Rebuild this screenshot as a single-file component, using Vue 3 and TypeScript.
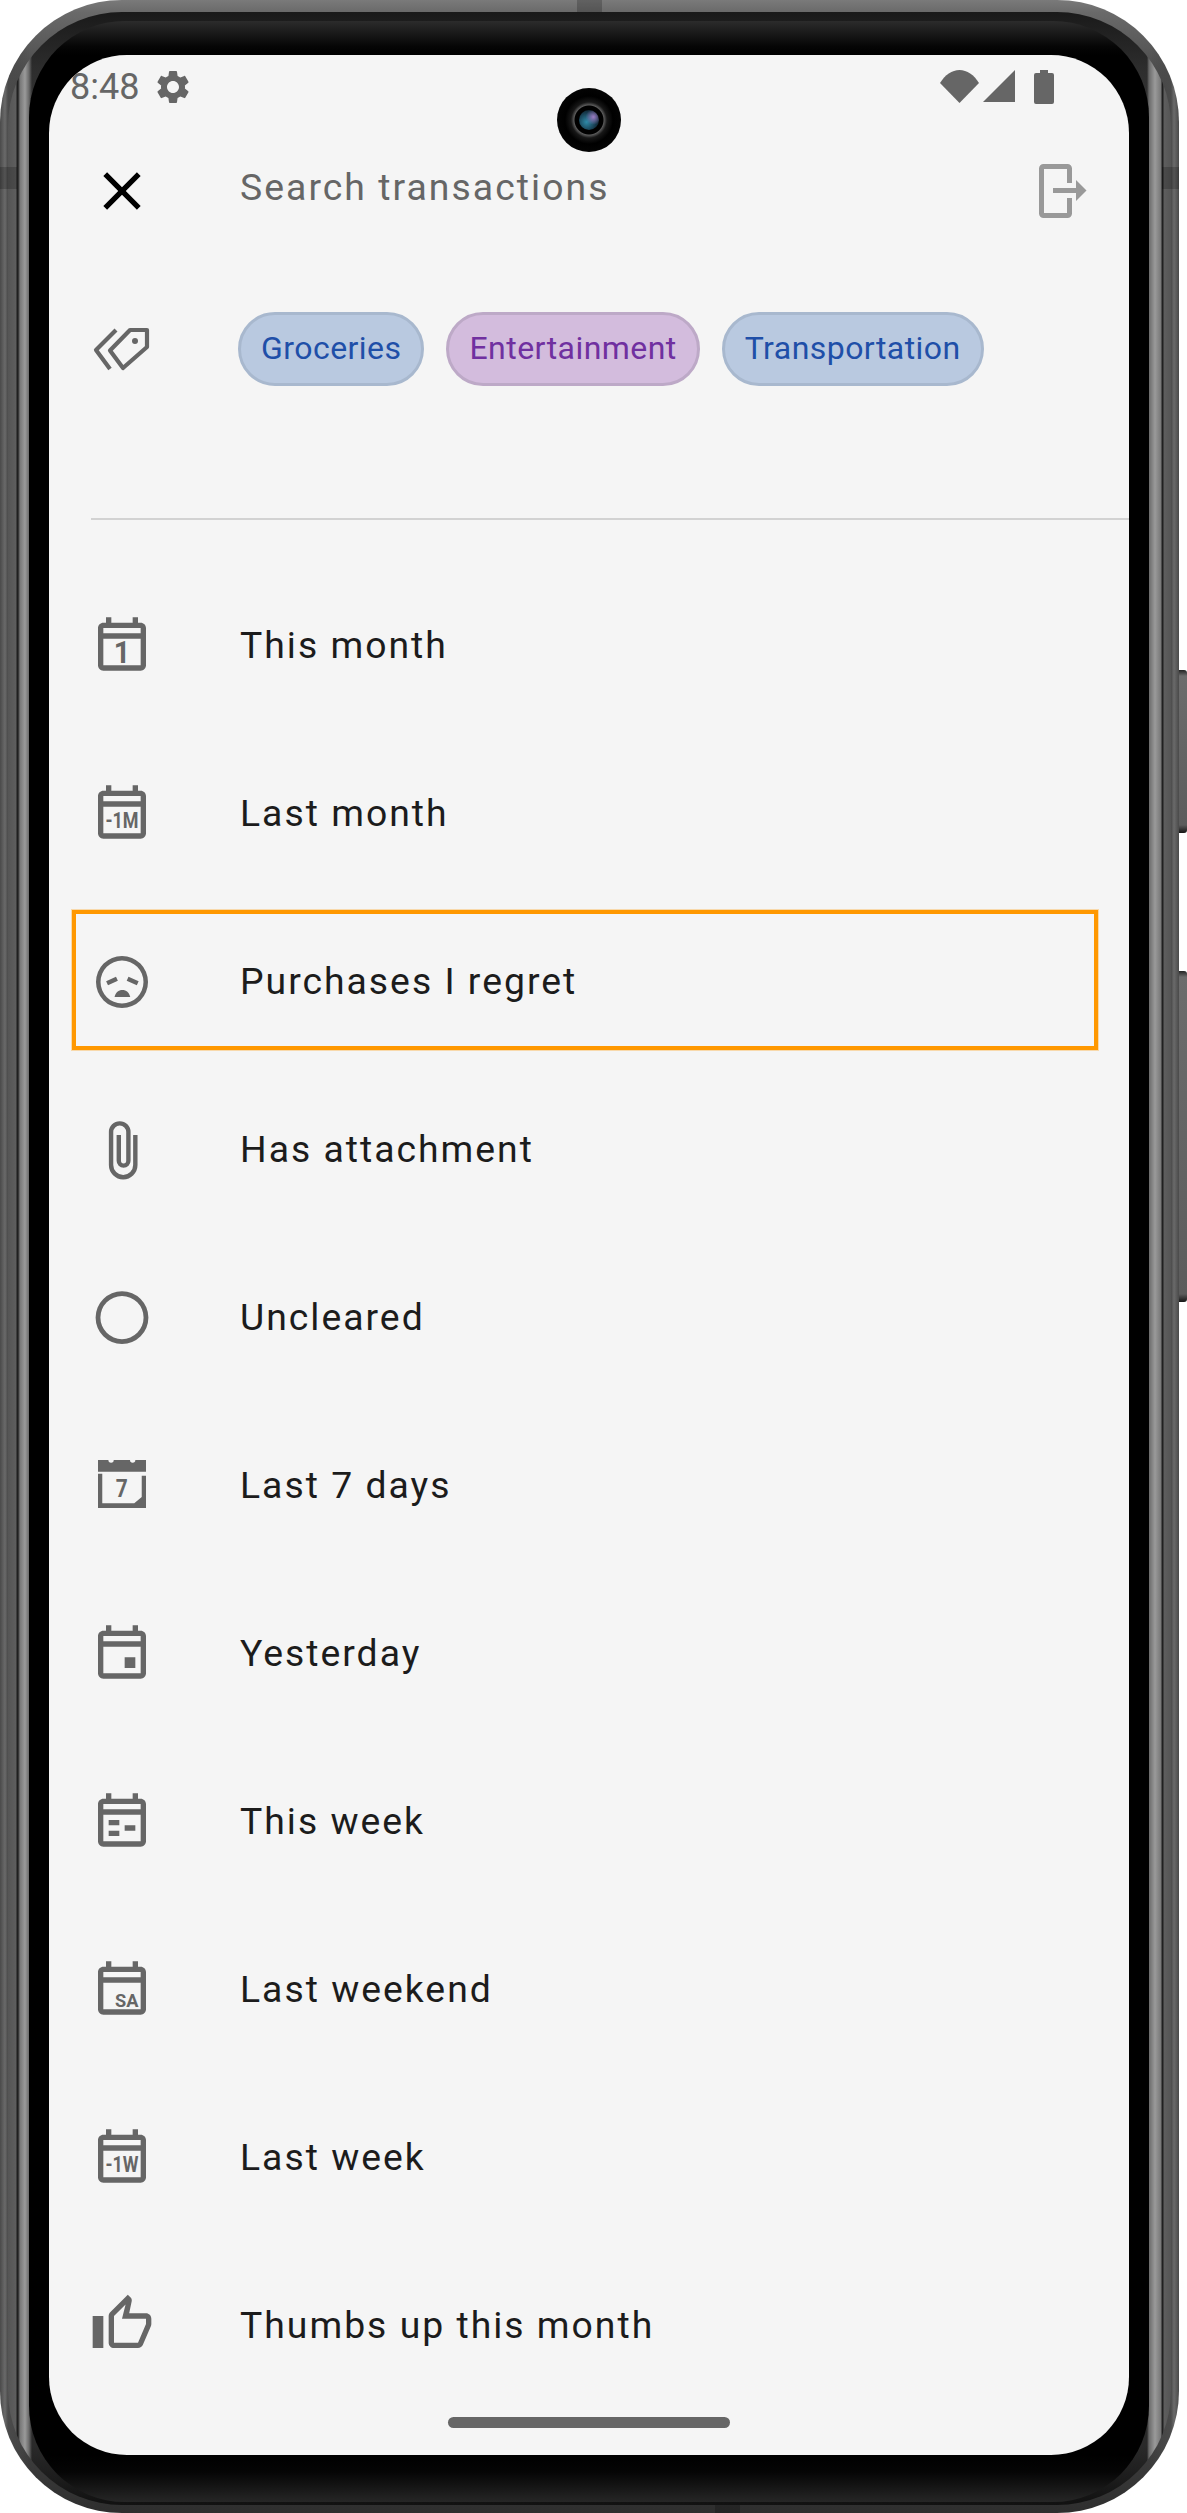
<template>
  <div class="phone">
    <span class="side-btn power"></span>
    <span class="side-btn volume"></span>
    <span class="antenna top"></span>
    <span class="antenna bottom"></span>
    <span class="antenna left"></span>
    <span class="antenna right"></span>

    <div class="rim">
      <div class="bezel">
        <main class="screen">
          <div class="camera"><span class="lens"></span></div>

          <div class="status-bar">
            <span class="time">8:48</span>
            <svg class="gear" viewBox="0 0 24 24"><path :d="gearPath" /></svg>
            <div class="status-icons">
              <svg class="wifi" viewBox="0 0 39 33"><path d="M0 13C5 5 12 0 19.500 0S34 5 39 13L19.500 33z" /></svg>
              <svg class="signal" viewBox="0 0 32 32"><path d="M0 32 32 0v32z" /></svg>
              <svg class="battery" viewBox="0 0 20 34"><path d="M6 0h8v3h4a2 2 0 0 1 2 2v27a2 2 0 0 1-2 2H2a2 2 0 0 1-2-2V5a2 2 0 0 1 2-2h4z" /></svg>
            </div>
          </div>

          <div class="search-row">
            <svg class="icon" viewBox="0 0 24 24">
              <path class="black" d="M19 6.410 17.590 5 12 10.590 6.410 5 5 6.410 10.590 12 5 17.590 6.410 19 12 13.410 17.590 19 19 17.590 13.410 12z" />
            </svg>
            <span class="search-text">Search transactions</span>
            <svg class="exit" viewBox="0 0 48 54">
              <path d="M30.500 19V4.500a2 2 0 0 0-2-2H4.500a2 2 0 0 0-2 2v45a2 2 0 0 0 2 2h24a2 2 0 0 0 2-2V34M14 26.500h24" />
              <path class="head" d="M37 16 47.500 26.500 37 37z" />
            </svg>
          </div>

          <div class="chip-row">
            <svg class="icon" viewBox="8 0 64 64">
              <path class="tag" d="M65 13H48L28 33.500 41 51 65 30zM34 13 14 33l14 19" />
              <circle cx="53" cy="24" r="3" />
            </svg>
            <div class="chips">
              <span v-for="chip in chips" :key="chip.name" class="chip" :class="chip.tone">{{ chip.name }}</span>
            </div>
          </div>

          <div class="divider"></div>

          <ul class="list">
            <li v-for="row in rows" :key="row.label" class="row">
              <svg class="icon" viewBox="0 0 24 24">
                <path v-if="row.d" fill-rule="evenodd" :d="row.d" />
                <path v-if="row.line" class="line" :d="row.line" />
                <text
                  v-if="row.mark"
                  class="mark"
                  :x="row.mark.x"
                  :y="row.mark.y"
                  :font-size="row.mark.size"
                  :textLength="row.mark.len"
                  lengthAdjust="spacingAndGlyphs"
                >{{ row.mark.text }}</text>
              </svg>
              <span class="row-label">{{ row.label }}</span>
              <span v-if="row.focused" class="focus-box"></span>
            </li>
          </ul>

          <div class="home-bar"></div>
        </main>
      </div>
    </div>
  </div>
</template>

<script setup lang="ts">
interface Mark {
  text: string
  x: number
  y: number
  size: number
  len: number
}

interface Row {
  label: string
  d?: string
  line?: string
  mark?: Mark
  focused?: boolean
}

const gearPath =
  'M19.14 12.94c.04-.3.06-.61.06-.94 0-.32-.02-.64-.07-.94l2.03-1.58c.18-.14.23-.41.12-.61l-1.92-3.32c-.12-.22-.37-.29-.59-.22l-2.39.96c-.5-.38-1.03-.7-1.62-.94l-.36-2.54c-.04-.24-.24-.41-.48-.41h-3.84c-.24 0-.43.17-.47.41l-.36 2.54c-.59.24-1.13.57-1.62.94l-2.39-.96c-.22-.08-.47 0-.59.22L2.74 8.87c-.12.21-.08.47.12.61l2.03 1.58c-.05.3-.09.63-.09.94s.02.64.07.94l-2.03 1.58c-.18.14-.23.41-.12.61l1.92 3.32c.12.22.37.29.59.22l2.39-.96c.5.38 1.03.7 1.62.94l.36 2.54c.05.24.24.41.48.41h3.84c.24 0 .44-.17.47-.41l.36-2.54c.59-.24 1.13-.56 1.62-.94l2.39.96c.22.08.47 0 .59-.22l1.92-3.32c.12-.22.07-.47-.12-.61l-2.01-1.58zM12 15.6c-1.98 0-3.6-1.62-3.6-3.6s1.62-3.6 3.6-3.6 3.6 1.62 3.6 3.6-1.62 3.6-3.6 3.6z'

const calendar =
  'M19 4h-1V2h-2v2H8V2H6v2H5c-1.1 0-2 .9-2 2v14c0 1.1.9 2 2 2h14c1.1 0 2-.9 2-2V6c0-1.1-.9-2-2-2zm0 16H5V10h14v10zm0-12H5V6h14v2z'

const chips = [
  { name: 'Groceries', tone: 'blue' },
  { name: 'Entertainment', tone: 'purple' },
  { name: 'Transportation', tone: 'blue' },
]

const rows: Row[] = [
  { label: 'This month', d: calendar, mark: { text: '1', x: 8.9, y: 19, size: 11.6, len: 6.2 } },
  { label: 'Last month', d: calendar, mark: { text: '-1M', x: 5.8, y: 18.1, size: 8.4, len: 12.4 } },
  {
    label: 'Purchases I regret',
    d: 'M12 3a9.750 9.750 0 1 0 0 19.500 9.750 9.750 0 0 0 0-19.500zm0 1.700a8.050 8.050 0 1 1 0 16.100 8.050 8.050 0 0 1 0-16.100zM9.200 18.350c.4-1.600 1.500-2.600 2.950-2.600s2.550 1 2.950 2.600z',
    line: 'M6.400 13.250 10.100 11.500M14.100 11.500 17.900 13.250',
    focused: true,
  },
  {
    label: 'Has attachment',
    line: 'M17 7.100V18.400a4.550 4.550 0 0 1-9.100 0V6a3.250 3.250 0 0 1 6.500 0V16.800a1.800 1.800 0 0 1-3.600 0V7.100',
  },
  {
    label: 'Uncleared',
    d: 'M12 2.700a9.900 9.900 0 1 0 0 19.800 9.900 9.900 0 0 0 0-19.800zm0 1.800a8.100 8.100 0 1 1 0 16.200 8.100 8.100 0 0 1 0-16.200z',
  },
  {
    label: 'Last 7 days',
    d: 'M3 3H6.900a1 1 0 0 0 2 0H15a1 1 0 0 0 2 0H21V7.400H3zM3 8.200H4.600V19.250H16.600L19.400 16.900V8.900H21V21H3z',
    mark: { text: '7', x: 9.700, y: 17, size: 9.8, len: 4.500 },
  },
  { label: 'Yesterday', d: calendar + 'M13 14h4v4h-4z' },
  { label: 'This week', d: calendar + 'M7 12h4v2H7zM7 16h4v2H7zM13 14h4v2h-4z' },
  { label: 'Last weekend', d: calendar, mark: { text: 'SA', x: 9.400, y: 19.100, size: 7.200, len: 8.800 } },
  { label: 'Last week', d: calendar, mark: { text: '-1W', x: 5.8, y: 18.1, size: 8.4, len: 12.4 } },
  {
    label: 'Thumbs up this month',
    d: 'M9 21h9c.83 0 1.54-.5 1.84-1.22l3.02-7.05c.09-.23.14-.47.14-.73v-2c0-1.1-.9-2-2-2h-6.31l.95-4.57.03-.32c0-.41-.17-.79-.44-1.06L14.170 1 7.580 7.590C7.220 7.950 7 8.450 7 9v10c0 1.100.9 2 2 2zM9 9l4.340-4.340L12 10h9v2l-3 7H9V9zM1 9h4v12H1z',
  },
]
</script>

<style>
html,
body {
  background: #fff;
}
</style>

<style scoped>
.phone {
  position: relative;
  box-sizing: border-box;
  width: 1179px;
  height: 2513px;
  padding: 12px 8px 8px;
  border-radius: 122px;
  background:
    linear-gradient(90deg, #4a4a4a 0, #6a6a6a 5px, #4a4a4a 8px, rgba(70, 70, 70, 0) 30px, rgba(70, 70, 70, 0) calc(100% - 30px), #4a4a4a calc(100% - 8px), #6a6a6a calc(100% - 5px), #4a4a4a 100%),
    linear-gradient(180deg, #7a7a7a 0, #6a6a6a 12px, #444 90px, #444 calc(100% - 90px), #2e2e2e 100%);
}

.side-btn {
  position: absolute;
  left: 1179px;
  width: 8px;
  border-radius: 0 3px 3px 0;
  background: linear-gradient(180deg, #222 0, #6c6c6c 6px, #5c5c5c calc(100% - 8px), #151515 100%);
}

.power {
  top: 670px;
  height: 163px;
}

.volume {
  top: 971px;
  height: 331px;
}

.antenna {
  position: absolute;
  background: rgba(0, 0, 0, 0.2);
}

.antenna.top {
  top: 0;
  left: 577px;
  width: 25px;
  height: 12px;
}

.antenna.bottom {
  bottom: 0;
  left: 715px;
  width: 25px;
  height: 8px;
}

.antenna.left {
  top: 167px;
  left: 0;
  width: 17px;
  height: 22px;
}

.antenna.right {
  top: 167px;
  right: 0;
  width: 17px;
  height: 22px;
}

.rim {
  box-sizing: border-box;
  height: 100%;
  padding: 9px 22px 3px 21px;
  border-radius: 114px;
  background:
    linear-gradient(90deg, #555 0, #5e5e5e 8px, #1e1e1e 9px, #222 10px, #777 12px, #9a9a9a 17px, #6a6a6a 21px, rgba(60, 60, 60, 0) 24px, rgba(60, 60, 60, 0) calc(100% - 24px), #6a6a6a calc(100% - 22px), #9a9a9a calc(100% - 16px), #777 calc(100% - 10px), #222 calc(100% - 9px), #1e1e1e calc(100% - 8px), #5e5e5e calc(100% - 7px), #555 100%),
    linear-gradient(180deg, #1a1a1a 0, #2e2e2e 60px, #3a3a3a 130px, #2a2a2a calc(100% - 60px), #111 100%);
}

.bezel {
  box-sizing: border-box;
  height: 100%;
  padding: 34px 20px 47px;
  border-radius: 96px;
  background:
    linear-gradient(180deg, #2c2c2c 0, #050505 26px, #000 34px, #000 calc(100% - 47px), #050505 calc(100% - 30px), #262626 100%);
}

.screen {
  position: relative;
  display: flex;
  flex-direction: column;
  width: 1080px;
  height: 2400px;
  overflow: hidden;
  border-radius: 78px;
  background: #f5f5f5;
  font-family: Roboto, "Liberation Sans", sans-serif;
}

.camera {
  position: absolute;
  top: 33px;
  left: 508px;
  display: flex;
  align-items: center;
  justify-content: center;
  width: 64px;
  height: 64px;
  border-radius: 50%;
  background: radial-gradient(circle, #000 0 14px, #5a5a5a 15px, #171717 18px, #000 24px, #0a0a0a 100%);
}

.lens {
  width: 20px;
  height: 20px;
  border-radius: 50%;
  background:
    radial-gradient(circle at 72% 35%, #9c7cc4 0, rgba(130, 90, 180, 0) 40%),
    radial-gradient(circle at 38% 60%, #2f8aa8 0, #15384a 55%, #06060a 100%);
}

.status-bar {
  display: flex;
  flex: none;
  align-items: center;
  height: 64px;
  padding: 0 75px 0 21px;
}

.time {
  color: #666;
  font-size: 36px;
  line-height: 1;
}

.gear {
  width: 40px;
  height: 40px;
  margin-left: 14px;
  fill: #666;
}

.status-icons {
  display: flex;
  align-items: flex-start;
  margin-left: auto;
}

.wifi {
  width: 39px;
  height: 33px;
  fill: #666;
}

.signal {
  width: 32px;
  height: 32px;
  margin-left: 4px;
  fill: #666;
}

.battery {
  width: 20px;
  height: 34px;
  margin-left: 19px;
  fill: #666;
}

.icon {
  flex: none;
  width: 64px;
  height: 64px;
  fill: #666;
}

.search-row {
  display: flex;
  flex: none;
  align-items: center;
  height: 144px;
  padding: 0 42px 0 41px;
}

.black {
  fill: #000;
}

.search-text {
  margin: -8px 0 0 86px;
  color: #666;
  font-size: 37.330px;
  letter-spacing: 2.050px;
}

.exit {
  width: 48px;
  height: 54px;
  margin-left: auto;
  fill: none;
  stroke: #999;
  stroke-width: 5;
}

.exit .head {
  fill: #999;
  stroke: none;
}

.chip-row {
  display: flex;
  flex: none;
  align-items: center;
  height: 172px;
  padding-left: 41px;
}

.tag {
  fill: none;
  stroke: #666;
  stroke-width: 4.200;
  stroke-linejoin: round;
}

.chips {
  display: flex;
  gap: 22px;
  margin-left: 84px;
}

.chip {
  box-sizing: border-box;
  display: flex;
  align-items: center;
  height: 74px;
  padding: 0 20px 2px;
  border: 3px solid;
  border-radius: 37px;
  font-size: 32px;
  letter-spacing: 0.450px;
}

.chip.blue {
  border-color: #a8b8ce;
  background: #b9c9e0;
  color: #1f4fa8;
}

.chip.purple {
  border-color: #bda9c7;
  background: #d3bcdd;
  color: #7030a0;
}

.divider {
  flex: none;
  height: 2px;
  margin: 83px 0 40px 42px;
  background: #d2d2d2;
}

.list {
  margin: 0;
  padding: 0;
  list-style: none;
}

.row {
  position: relative;
  display: flex;
  align-items: center;
  height: 168px;
  padding-left: 41px;
}

.row-label {
  margin: 2px 0 0 86px;
  color: #1c1c1c;
  font-size: 37.330px;
  letter-spacing: 2px;
}

.line {
  fill: none;
  stroke: #666;
  stroke-width: 1.650;
}

.mark {
  fill: #666;
  font-family: Roboto, sans-serif;
  font-weight: 700;
}

.focus-box {
  position: absolute;
  top: 14px;
  left: 23px;
  box-sizing: border-box;
  width: 1026px;
  height: 140px;
  border: 4px solid #ff9800;
  box-shadow: 0 0 0 1px rgba(255, 152, 0, 0.3);
}

.home-bar {
  position: absolute;
  bottom: 27px;
  left: 399px;
  width: 282px;
  height: 11px;
  border-radius: 6px;
  background: #666;
}
</style>
